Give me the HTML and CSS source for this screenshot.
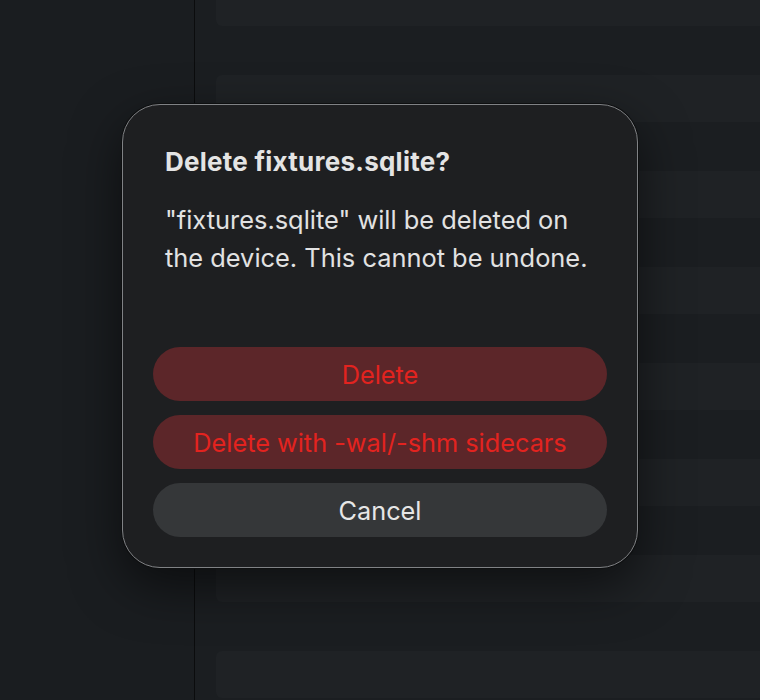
FILE: index.html
```html
<!DOCTYPE html>
<html lang="en">
<head>
  <meta charset="UTF-8">
  <meta name="viewport" content="width=device-width, initial-scale=1.0">
  <title>Delete file</title>
  <link rel="stylesheet" href="styles.css">
</head>
<body>

  <div class="app">
    <aside class="sidebar"></aside>
    <main class="list">
      <div class="row"></div>
      <div class="row"></div>
      <div class="row"></div>
      <div class="row"></div>
      <div class="row"></div>
      <div class="row"></div>
      <div class="row"></div>
      <div class="row"></div>
    </main>
  </div>

  <div class="dialog" role="alertdialog">
    <h1 class="dialog-title">Delete fixtures.sqlite?</h1>
    <p class="dialog-text">"fixtures.sqlite" will be deleted on the device. This cannot be undone.</p>
    <div class="actions">
      <button class="destructive">Delete</button>
      <button class="destructive">Delete with -wal/-shm sidecars</button>
      <button>Cancel</button>
    </div>
  </div>

</body>
</html>
```

FILE: styles.css
```css
body {
  margin: 0;
  height: 100vh;
  overflow: hidden;
  background-color: #1b1e21;
  font-family: 'Inter', 'Noto Sans', sans-serif;
  position: relative;
}

.app {
  display: flex;
  height: 100%;
}

.sidebar {
  width: 194px;
  background-color: #1a1d20;
  border-right: 1px solid #0b0c0d;
}

.list {
  flex: 1;
  display: flex;
  flex-direction: column;
  gap: 49px;
  padding-left: 21px;
  margin-top: -21px;
}

.row {
  height: 47px;
  flex-shrink: 0;
  background-color: #1f2225;
  border-radius: 6px 0 0 6px;
}

.dialog {
  position: absolute;
  left: 122px;
  top: 104px;
  width: 516px;
  height: 464px;
  box-sizing: border-box;
  border: 1px solid #808285;
  border-radius: 38px;
  background-color: #1e1f21;
  box-shadow: 0 0 0 1px #0e0f10, 0 18px 50px rgba(0, 0, 0, 0.55);
  padding: 41px 30px 30px;
  display: flex;
  flex-direction: column;
}

.dialog-title {
  margin: 0 0 0 12px;
  font-size: 26px;
  line-height: 32px;
  font-weight: 700;
  letter-spacing: 0.25px;
  color: #e4e4e4;
}

.dialog-text {
  margin: 23px 0 0 12px;
  font-size: 25.4px;
  line-height: 38px;
  color: #e2e2e2;
}

.actions {
  margin-top: auto;
  display: flex;
  flex-direction: column;
  gap: 14px;
}

button {
  height: 54px;
  border: none;
  border-radius: 27px;
  background-color: #353739;
  color: #e6e6e6;
  font-family: inherit;
  font-size: 25.3px;
  cursor: pointer;
}

button.destructive {
  background-color: #5c2629;
  color: #e3231f;
}
```
